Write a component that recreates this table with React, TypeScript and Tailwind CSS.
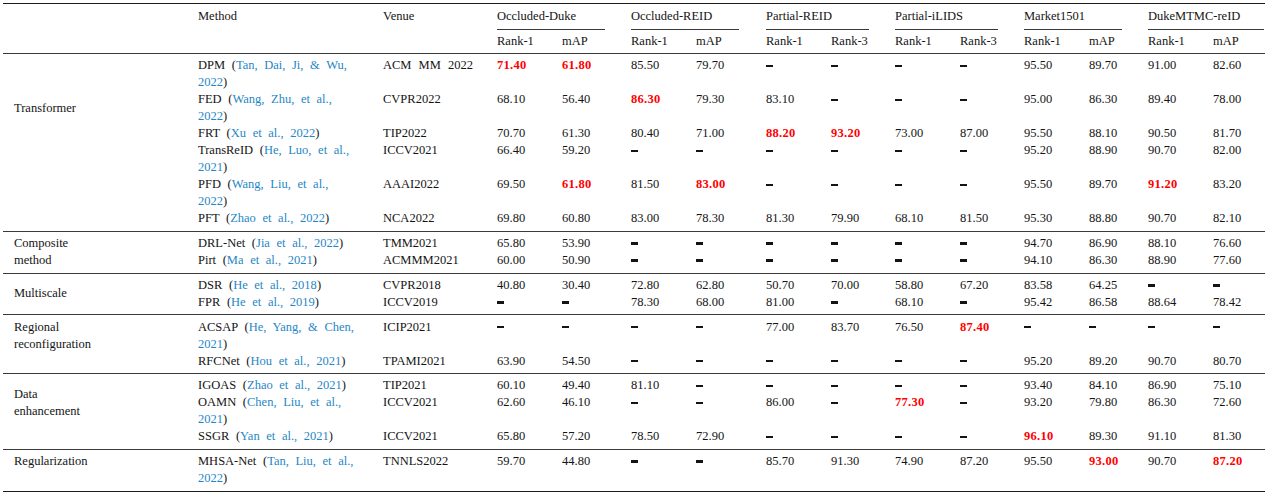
import React from "react";

type Row = {
  name: string;
  cite: string[];
  venue: string;
  vals: string[];
};

type Group = {
  label: string[];
  pad: string;
  rows: Row[];
};

// "*" = best result (red bold), "-" = not reported
const groups: Group[] = [
  {
    label: ["Transformer"],
    pad: "pt-[42.5px]",
    rows: [
      { name: "DPM", cite: ["Tan, Dai, Ji, & Wu,", "2022"], venue: "ACM MM 2022", vals: ["*71.40", "*61.80", "85.50", "79.70", "-", "-", "-", "-", "95.50", "89.70", "91.00", "82.60"] },
      { name: "FED", cite: ["Wang, Zhu, et al.,", "2022"], venue: "CVPR2022", vals: ["68.10", "56.40", "*86.30", "79.30", "83.10", "-", "-", "-", "95.00", "86.30", "89.40", "78.00"] },
      { name: "FRT", cite: ["Xu et al., 2022"], venue: "TIP2022", vals: ["70.70", "61.30", "80.40", "71.00", "*88.20", "*93.20", "73.00", "87.00", "95.50", "88.10", "90.50", "81.70"] },
      { name: "TransReID", cite: ["He, Luo, et al.,", "2021"], venue: "ICCV2021", vals: ["66.40", "59.20", "-", "-", "-", "-", "-", "-", "95.20", "88.90", "90.70", "82.00"] },
      { name: "PFD", cite: ["Wang, Liu, et al.,", "2022"], venue: "AAAI2022", vals: ["69.50", "*61.80", "81.50", "*83.00", "-", "-", "-", "-", "95.50", "89.70", "*91.20", "83.20"] },
      { name: "PFT", cite: ["Zhao et al., 2022"], venue: "NCA2022", vals: ["69.80", "60.80", "83.00", "78.30", "81.30", "79.90", "68.10", "81.50", "95.30", "88.80", "90.70", "82.10"] },
    ],
  },
  {
    label: ["Composite", "method"],
    pad: "pt-0",
    rows: [
      { name: "DRL-Net", cite: ["Jia et al., 2022"], venue: "TMM2021", vals: ["65.80", "53.90", "-", "-", "-", "-", "-", "-", "94.70", "86.90", "88.10", "76.60"] },
      { name: "Pirt", cite: ["Ma et al., 2021"], venue: "ACMMM2021", vals: ["60.00", "50.90", "-", "-", "-", "-", "-", "-", "94.10", "86.30", "88.90", "77.60"] },
    ],
  },
  {
    label: ["Multiscale"],
    pad: "pt-[8.5px]",
    rows: [
      { name: "DSR", cite: ["He et al., 2018"], venue: "CVPR2018", vals: ["40.80", "30.40", "72.80", "62.80", "50.70", "70.00", "58.80", "67.20", "83.58", "64.25", "-", "-"] },
      { name: "FPR", cite: ["He et al., 2019"], venue: "ICCV2019", vals: ["-", "-", "78.30", "68.00", "81.00", "-", "68.10", "-", "95.42", "86.58", "88.64", "78.42"] },
    ],
  },
  {
    label: ["Regional", "reconfiguration"],
    pad: "pt-0",
    rows: [
      { name: "ACSAP", cite: ["He, Yang, & Chen,", "2021"], venue: "ICIP2021", vals: ["-", "-", "-", "-", "77.00", "83.70", "76.50", "*87.40", "-", "-", "-", "-"] },
      { name: "RFCNet", cite: ["Hou et al., 2021"], venue: "TPAMI2021", vals: ["63.90", "54.50", "-", "-", "-", "-", "-", "-", "95.20", "89.20", "90.70", "80.70"] },
    ],
  },
  {
    label: ["Data", "enhancement"],
    pad: "pt-[8.5px]",
    rows: [
      { name: "IGOAS", cite: ["Zhao et al., 2021"], venue: "TIP2021", vals: ["60.10", "49.40", "81.10", "-", "-", "-", "-", "-", "93.40", "84.10", "86.90", "75.10"] },
      { name: "OAMN", cite: ["Chen, Liu, et al.,", "2021"], venue: "ICCV2021", vals: ["62.60", "46.10", "-", "-", "86.00", "-", "*77.30", "-", "93.20", "79.80", "86.30", "72.60"] },
      { name: "SSGR", cite: ["Yan et al., 2021"], venue: "ICCV2021", vals: ["65.80", "57.20", "78.50", "72.90", "-", "-", "-", "-", "*96.10", "89.30", "91.10", "81.30"] },
    ],
  },
  {
    label: ["Regularization"],
    pad: "pt-0",
    rows: [
      { name: "MHSA-Net", cite: ["Tan, Liu, et al.,", "2022"], venue: "TNNLS2022", vals: ["59.70", "44.80", "-", "-", "85.70", "91.30", "74.90", "87.20", "95.50", "*93.00", "90.70", "*87.20"] },
    ],
  },
];

const colW = [
  "w-[65px]", "w-[69px]", "w-[65px]", "w-[70px]", "w-[65px]", "w-[64px]",
  "w-[65px]", "w-[64px]", "w-[65px]", "w-[59px]", "w-[65px]", "w-[52px]",
];

const datasets = [
  { name: "Occluded-Duke", w: "w-[134px]", rule: "w-[108px]", sub: ["Rank-1", "mAP"] },
  { name: "Occluded-REID", w: "w-[135px]", rule: "w-[108px]", sub: ["Rank-1", "mAP"] },
  { name: "Partial-REID", w: "w-[129px]", rule: "w-[103px]", sub: ["Rank-1", "Rank-3"] },
  { name: "Partial-iLIDS", w: "w-[129px]", rule: "w-[103px]", sub: ["Rank-1", "Rank-3"] },
  { name: "Market1501", w: "w-[124px]", rule: "w-[98px]", sub: ["Rank-1", "mAP"] },
  { name: "DukeMTMC-reID", w: "w-[117px]", rule: "w-[116px]", sub: ["Rank-1", "mAP"] },
];

function Cite({ children }: { children: React.ReactNode }) {
  return <span className="text-[#1f87c6]">{children}</span>;
}

function Value({ v }: { v: string }) {
  if (v === "-")
    return <span className="inline-block w-[7px] h-[2.5px] bg-[#141414] align-middle -mt-[1px]" aria-label="–" />;
  if (v.startsWith("*"))
    return <span className="font-bold text-[#ff0000] tracking-[0.3px]">{v.slice(1)}</span>;
  return <span>{v}</span>;
}

function MethodCell({ row }: { row: Row }) {
  if (row.cite.length === 2) {
    return (
      <div>
        <div>
          {row.name} (<Cite>{row.cite[0]}</Cite>
        </div>
        <div>
          <Cite>{row.cite[1]}</Cite>)
        </div>
      </div>
    );
  }
  return (
    <div>
      {row.name} (<Cite>{row.cite[0]}</Cite>)
    </div>
  );
}

function Rule({ thick }: { thick?: boolean }) {
  return thick ? (
    <div className="h-[1.5px] bg-[#1c1c1c]" />
  ) : (
    <div className="h-px mt-[3.5px] mb-[3.25px] bg-[#3a3a3a]" />
  );
}

export default function App() {
  return (
    <div className="w-[1280px] h-[498px] bg-white overflow-hidden pt-[2.5px] pl-[3px] text-[#141414] text-[12.5px] leading-[17px] font-['Liberation_Serif',serif]">
      <div className="w-[1262px]">
        <Rule thick />

        {/* header */}
        <div className="flex pt-[3.5px]">
          <div className="w-[195px]" />
          <div className="w-[185px]">Method</div>
          <div className="w-[114px]">Venue</div>
          {datasets.map(d => (
            <div key={d.name} className={d.w}>
              <div>{d.name}</div>
              <div className={`${d.rule} h-px bg-[#3a3a3a] mt-[4px] mb-[3px]`} />
              <div className="flex">
                <div className="w-[65px]">{d.sub[0]}</div>
                <div>{d.sub[1]}</div>
              </div>
            </div>
          ))}
        </div>

        {groups.map(g => (
          <React.Fragment key={g.label.join(" ")}>
            <Rule />
            <div className="flex">
              <div className={`w-[195px] pl-[11px] ${g.pad}`}>
                {g.label.map(l => (
                  <div key={l}>{l}</div>
                ))}
              </div>
              <div className="flex-1">
                {g.rows.map(r => (
                  <div key={r.name} className="flex items-start">
                    <div className="w-[185px] [word-spacing:3.5px]">
                      <MethodCell row={r} />
                    </div>
                    <div className="w-[114px] [word-spacing:4px]">{r.venue}</div>
                    {r.vals.map((v, i) => (
                      <div key={i} className={colW[i]}>
                        <Value v={v} />
                      </div>
                    ))}
                  </div>
                ))}
              </div>
            </div>
          </React.Fragment>
        ))}

        <div className="pt-[3.5px]">
          <Rule thick />
        </div>
      </div>
    </div>
  );
}
